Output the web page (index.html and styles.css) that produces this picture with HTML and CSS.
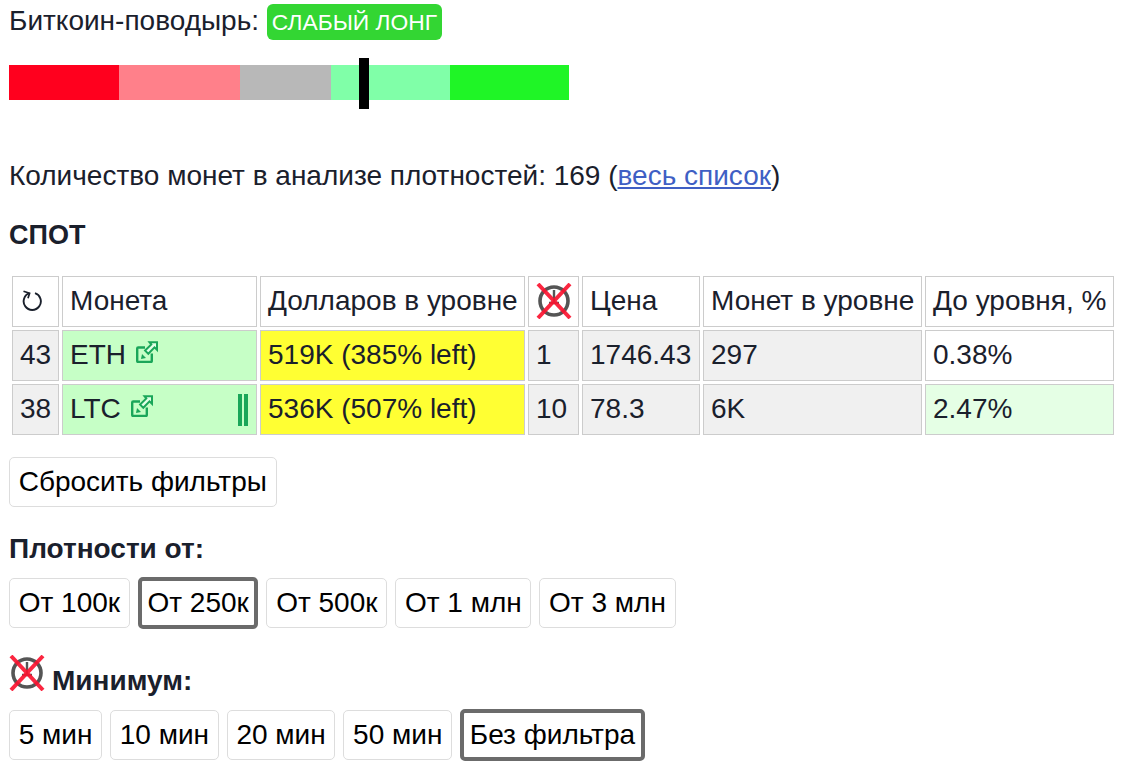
FILE: index.html
```html
<!DOCTYPE html>
<html lang="ru">
<head>
<meta charset="utf-8">
<title>Плотности</title>
<link rel="stylesheet" href="styles.css">
</head>
<body>
<svg class="defs" width="0" height="0" aria-hidden="true">
  <symbol id="nosleep" viewBox="0 0 36 36">
    <circle cx="18" cy="18" r="14" fill="none" stroke="#555" stroke-width="3.6"/>
    <path d="M18 7v12M13 20h10" stroke="#555" stroke-width="2.4" fill="none"/>
    <path d="M2 1 34 35M34 1 2 35" stroke="#fb1430" stroke-width="4" fill="none" opacity=".92"/>
  </symbol>
  <symbol id="ext" viewBox="0 0 22 22">
    <path d="M9 6.5H2.2a1 1 0 0 0-1 1V20a1 1 0 0 0 1 1h12.6a1 1 0 0 0 1-1v-7.5" fill="none" stroke="#1aa659" stroke-width="2.4"/>
    <path d="M13.5 1.2H21v7.6l-2.5-2.4-6.2 6.4-3.2-3.2 6.2-6.2z" fill="#e2ffe6" stroke="#1aa659" stroke-width="2"/>
    <path d="M5 18l1-5 4 4z" fill="#1aa659"/>
  </symbol>
  <symbol id="refresh" viewBox="0 0 20 24">
    <path d="M7.5 4.2A8.6 8.6 0 1 0 13 4.2" fill="none" stroke="#1a202c" stroke-width="1.9"/>
    <path d="M1.5 2.2 7.6 4.3 6 9.2" fill="none" stroke="#1a202c" stroke-width="1.7"/>
  </symbol>
</svg>
<p class="guide">Биткоин-поводырь: <span class="badge">СЛАБЫЙ ЛОНГ</span></p>
<div class="meter">
  <div class="seg s1"></div>
  <div class="seg s2"></div>
  <div class="seg s3"></div>
  <div class="seg s4"></div>
  <div class="seg s5"></div>
  <div class="needle"></div>
</div>
<p class="count">Количество монет в анализе плотностей: 169 (<a href="#">весь список</a>)</p>
<h2 class="spot">СПОТ</h2>
<table class="grid">
  <colgroup>
    <col class="c1"><col class="c2"><col class="c3"><col class="c4"><col class="c5"><col class="c6"><col class="c7">
  </colgroup>
  <thead>
    <tr>
      <th><svg class="refresh" role="img" aria-label="Обновить"><use href="#refresh"/></svg></th>
      <th>Монета</th>
      <th>Долларов в уровне</th>
      <th><svg class="nosleep"><use href="#nosleep"/></svg></th>
      <th>Цена</th>
      <th>Монет в уровне</th>
      <th>До уровня, %</th>
    </tr>
  </thead>
  <tbody>
    <tr>
      <td class="gray">43</td>
      <td class="green"><div class="coin-row"><span>ETH</span><svg class="ext"><use href="#ext"/></svg></div></td>
      <td class="yellow">519K (385% left)</td>
      <td class="gray">1</td>
      <td class="gray">1746.43</td>
      <td class="gray">297</td>
      <td>0.38%</td>
    </tr>
    <tr>
      <td class="gray">38</td>
      <td class="green"><div class="coin-row"><span>LTC</span><svg class="ext"><use href="#ext"/></svg><span class="pause"></span></div></td>
      <td class="yellow">536K (507% left)</td>
      <td class="gray">10</td>
      <td class="gray">78.3</td>
      <td class="gray">6K</td>
      <td class="pale">2.47%</td>
    </tr>
  </tbody>
</table>
<div class="btns reset"><button>Сбросить фильтры</button></div>
<h3 class="label">Плотности от:</h3>
<div class="btns">
  <button>От 100к</button>
  <button class="on">От 250к</button>
  <button>От 500к</button>
  <button>От 1 млн</button>
  <button>От 3 млн</button>
</div>
<h3 class="label min"><svg class="nosleep"><use href="#nosleep"/></svg> <span>Минимум:</span></h3>
<div class="btns">
  <button>5 мин</button>
  <button>10 мин</button>
  <button>20 мин</button>
  <button>50 мин</button>
  <button class="on">Без фильтра</button>
</div>
</body>
</html>
```
FILE: styles.css
```css
* { box-sizing: border-box; }
html, body { overflow: hidden; }
body {
  margin: 0;
  padding: 0 9px;
  height: 770px;
  background: #fff;
  color: #1a202c;
  font-family: "Liberation Sans", Arial, sans-serif;
  font-size: 28px;
  line-height: 30px;
}
.defs { position: absolute; }
p, h2, h3 { margin: 0; }
.guide { padding-top: 6px; height: 40px; white-space: nowrap; }
.badge {
  display: inline-block;
  background: #33d633;
  color: #fff;
  font-size: 22.8px;
  line-height: 36px;
  height: 36px;
  margin-top: -2px;
  padding: 0 5px;
  border-radius: 6px;
  vertical-align: top;
}
.meter { position: relative; display: flex; width: 560px; height: 35px; margin-top: 25px; }
.seg { height: 100%; }
.s1 { width: 110px; background: #ff001e; }
.s2 { width: 121px; background: #ff808a; }
.s3 { width: 91px; background: #b8b8b8; }
.s4 { width: 119px; background: #80ffa8; }
.s5 { width: 119px; background: #1ff526; }
.needle { position: absolute; left: 350px; top: -7px; width: 10px; height: 51px; background: #000; }
.count { margin-top: 61px; }
a { color: #3f5fc4; }
.spot { margin-top: 29px; font-size: 27px; font-weight: 700; }
.grid {
  table-layout: fixed;
  width: 1108px;
  border-collapse: separate;
  border-spacing: 3px;
  margin-top: 23px;
}
.c1 { width: 47px; }
.c2 { width: 195px; }
.c3 { width: 265px; }
.c4 { width: 51px; }
.c5 { width: 118px; }
.c6 { width: 219px; }
.c7 { width: 189px; }
.grid th, .grid td {
  border: 1px solid #ccc;
  padding: 0 7px 2px;
  height: 51px;
  font-weight: 400;
  text-align: left;
  white-space: nowrap;
}
.gray { background: #f0f0f0; }
.green { background: #c6ffc6; }
.yellow { background: #ffff33; }
.pale { background: #e5ffe5; }
.nosleep { width: 36px; height: 36px; display: block; flex: none; }
.refresh { width: 20px; height: 24px; display: block; margin: 1px 0 0 2px; }
.coin-row { display: flex; align-items: flex-start; gap: 10px; height: 30px; }
.ext { width: 22px; height: 22px; margin-top: 1px; }
.pause {
  margin-left: auto;
  margin-right: 1px;
  width: 10px;
  height: 32px;
  border-left: 4px solid #1aa659;
  border-right: 4px solid #1aa659;
}
.btns { display: flex; gap: 8px; height: 50px; }
button {
  font: inherit;
  color: #000;
  background: #fff;
  border: 1px solid #ddd;
  border-radius: 5px;
  height: 50px;
  padding: 0 8.7px;
  white-space: nowrap;
}
button.on { border: 4px solid #6b6b6b; padding: 0 5.7px; height: 52px; margin-top: -1px; }
.reset { margin-top: 19px; }
.label { font-size: 28px; font-weight: 700; margin-top: 27px; margin-bottom: 14px; }
.min { display: flex; align-items: flex-end; gap: 7px; }
.min .nosleep { margin-bottom: 5px; }
```
